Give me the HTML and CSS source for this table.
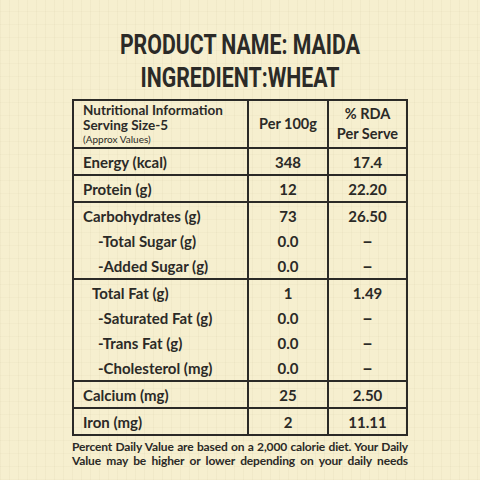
FILE: index.html
```html
<!DOCTYPE html>
<html lang="en">
<head>
    <meta charset="UTF-8">
    <meta name="viewport" content="width=device-width, initial-scale=1.0">
    <title>Maida Nutrition Label</title>
    <link rel="stylesheet" href="styles.css">
</head>
<body>
    <div class="label">
        <div class="heading">
            <h1><span>PRODUCT NAME: MAIDA</span></h1>
            <h1><span>INGREDIENT:WHEAT</span></h1>
        </div>

        <table class="facts">
            <colgroup>
                <col class="col-name">
                <col class="col-value">
                <col class="col-rda">
            </colgroup>
            <thead>
                <tr>
                    <th class="name">
                        <div>Nutritional Information</div>
                        <div>Serving Size-5</div>
                        <div class="approx">(Approx Values)</div>
                    </th>
                    <th>Per 100g</th>
                    <th>% RDA<br>Per Serve</th>
                </tr>
            </thead>
            <tbody>
                <tr class="split">
                    <td class="name">Energy (kcal)</td>
                    <td>348</td>
                    <td>17.4</td>
                </tr>
                <tr class="split">
                    <td class="name">Protein (g)</td>
                    <td>12</td>
                    <td>22.20</td>
                </tr>
                <tr class="split">
                    <td class="name">Carbohydrates (g)</td>
                    <td>73</td>
                    <td>26.50</td>
                </tr>
                <tr>
                    <td class="name sub">-Total Sugar (g)</td>
                    <td>0.0</td>
                    <td class="dash">&ndash;</td>
                </tr>
                <tr>
                    <td class="name sub">-Added Sugar (g)</td>
                    <td>0.0</td>
                    <td class="dash">&ndash;</td>
                </tr>
                <tr class="split">
                    <td class="name mid">Total Fat (g)</td>
                    <td>1</td>
                    <td>1.49</td>
                </tr>
                <tr>
                    <td class="name sub">-Saturated Fat (g)</td>
                    <td>0.0</td>
                    <td class="dash">&ndash;</td>
                </tr>
                <tr>
                    <td class="name sub">-Trans Fat (g)</td>
                    <td>0.0</td>
                    <td class="dash">&ndash;</td>
                </tr>
                <tr>
                    <td class="name sub">-Cholesterol (mg)</td>
                    <td>0.0</td>
                    <td class="dash">&ndash;</td>
                </tr>
                <tr class="split">
                    <td class="name">Calcium (mg)</td>
                    <td>25</td>
                    <td>2.50</td>
                </tr>
                <tr class="split">
                    <td class="name">Iron (mg)</td>
                    <td>2</td>
                    <td>11.11</td>
                </tr>
            </tbody>
        </table>

        <p class="note">Percent Daily Value are based on a 2,000 calorie diet. Your Daily<br>Value may be higher or lower depending on your daily needs</p>
    </div>
</body>
</html>
```

FILE: styles.css
```css
html, body {
    margin: 0;
    padding: 0;
}
body {
    width: 480px;
    height: 480px;
    overflow: hidden;
    font-family: 'Lato', 'Open Sans', sans-serif;
    color: #2b2a27;
    background-color: #f6efcf;
    background-image:
        repeating-linear-gradient(90deg, rgba(140, 125, 80, 0.05) 0 1px, transparent 1px 9px),
        repeating-linear-gradient(0deg, rgba(140, 125, 80, 0.04) 0 1px, transparent 1px 13px);
}
.label {
    width: 336px;
    margin: 0 auto;
    padding-top: 28px;
}
.heading {
    text-align: center;
}
h1 {
    margin: 0;
    font-family: 'Roboto', sans-serif;
    font-weight: 700;
    font-size: 28px;
    line-height: 33px;
    color: #2b2a27;
}
h1 span {
    display: inline-block;
    transform: scaleX(0.76);
    white-space: nowrap;
}
.facts {
    margin-top: 5px;
    width: 336px;
    table-layout: fixed;
    border-collapse: collapse;
    border: 2px solid #2b2a27;
}
.col-name {
    width: 175px;
}
.col-value {
    width: 80px;
}
.facts th,
.facts td {
    border-left: 2px solid #2b2a27;
    border-right: 2px solid #2b2a27;
    padding: 0;
    height: 25px;
    text-align: center;
    font-weight: 700;
    font-size: 15px;
    line-height: 18px;
}
.facts th {
    height: 46px;
    font-size: 14.5px;
    line-height: 20px;
    border-bottom: 2px solid #2b2a27;
}
.facts th.name {
    font-size: 13.5px;
    line-height: 15px;
    text-align: left;
    padding-left: 9px;
}
.approx {
    font-size: 10px;
    font-weight: 400;
    line-height: 12px;
}
.facts tr.split td {
    border-top: 2px solid #2b2a27;
}
.facts td.name {
    text-align: left;
    padding-left: 9px;
}
.facts td.mid {
    padding-left: 18px;
}
.facts td.sub {
    padding-left: 24px;
}
.facts td.dash {
    font-size: 19px;
}
.note {
    margin: 4px 0 0;
    font-size: 12px;
    letter-spacing: -0.15px;
    font-weight: 700;
    line-height: 14px;
    text-align: justify;
    text-align-last: justify;
}
```
